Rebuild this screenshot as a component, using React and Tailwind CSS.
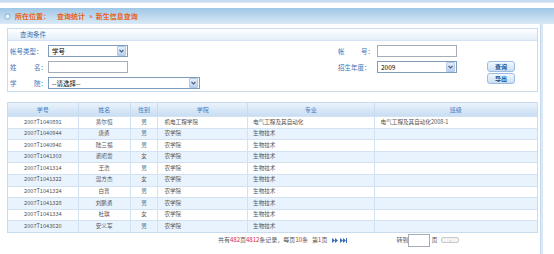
import React from 'react'

const rows = [
  ['2007T1040891', '黄尔恒', '男', '机电工程学院', '电气工程及其自动化', '电气工程及其自动化2008-1'],
  ['2007T1040944', '唐勇', '男', '农学院', '生物技术', ''],
  ['2007T1040946', '陆三福', '男', '农学院', '生物技术', ''],
  ['2007T1041303', '裘昭蕾', '女', '农学院', '生物技术', ''],
  ['2007T1041314', '王浩', '男', '农学院', '生物技术', ''],
  ['2007T1041322', '温方杰', '女', '农学院', '生物技术', ''],
  ['2007T1041324', '白普', '男', '农学院', '生物技术', ''],
  ['2007T1041328', '刘鹏勇', '男', '农学院', '生物技术', ''],
  ['2007T1041334', '杜琪', '女', '农学院', '生物技术', ''],
  ['2007T1043620', '安义军', '男', '农学院', '生物技术', ''],
]

const cols = [
  { label: '学号', w: 'w-[71px]', align: 'justify-center' },
  { label: '姓名', w: 'w-[52px]', align: 'justify-center' },
  { label: '性别', w: 'w-[28px]', align: 'justify-center' },
  { label: '学院', w: 'w-[90px]', align: 'justify-start pl-[6px]' },
  { label: '专业', w: 'w-[127px]', align: 'justify-start pl-[5px]' },
  { label: '班级', w: 'w-[163px]', align: 'justify-start pl-[6px]' },
]

const font = { fontFamily: '"Noto Sans CJK SC", "Liberation Sans", sans-serif' }

function Select({ value, w }) {
  return (
    <div className={`${w} h-[12px] border border-[#7f9db9] bg-white flex items-center`}>
      <span className="flex-1 pl-[3px] text-[6.5px] leading-none text-black">{value}</span>
      <span className="w-[9px] h-[10px] mr-[1px] rounded-[1px] bg-gradient-to-b from-[#e3eefb] to-[#b9d1f0] border border-[#b3c9e8] flex items-center justify-center">
        <svg width="5" height="4" viewBox="0 0 5 4"><path d="M0.5 1 L2.5 3 L4.5 1" stroke="#4d6185" strokeWidth="1.2" fill="none" /></svg>
      </span>
    </div>
  )
}

function Input({ w }) {
  return <div className={`${w} h-[12px] border border-[#a5acb5] bg-white`} />
}

function Btn({ children }) {
  return (
    <div className="w-[28px] h-[11px] rounded-[3px] border border-[#9dbde0] bg-gradient-to-b from-[#f4f9fe] to-[#c9def4] flex items-center justify-center text-[6px] leading-none text-[#1d4e8e] font-bold">
      {children}
    </div>
  )
}

export default function App() {
  return (
    <div className="w-[554px] h-[254px] bg-white overflow-hidden" style={font}>
      {/* top strip */}
      <div className="h-[3px] bg-[#c7dcf1] border-b border-[#dde9f6]" />
      <div className="h-[5px]" />
      {/* breadcrumb */}
      <div className="h-[16px] bg-gradient-to-b from-[#9fc7e7] to-[#d9e9f6] flex items-center pl-[4px] text-[7px] font-bold text-[#e6641b] leading-none">
        <svg width="7" height="7" viewBox="0 0 7 7" className="mr-[4px]">
          <circle cx="3.5" cy="3.5" r="2.6" fill="#eaf4fc" stroke="#6fa6d6" strokeWidth="0.8" />
        </svg>
        <span>所在位置：</span>
        <span className="ml-[7px]">查询统计</span>
        <span className="ml-[4px] mr-[3px]">»</span>
        <span>新生信息查询</span>
      </div>

      <div className="flex">
        <div className="w-[540px] pl-[7px] pt-[4px]">
          {/* query panel */}
          <div className="w-[531px] h-[64px] border border-[#c8dbef]">
            <div className="h-[12px] bg-gradient-to-b from-[#ffffff] to-[#e3eefa] border-b border-[#d3e3f4] flex items-center pl-[12px] text-[6.5px] leading-none text-[#3a6ea8]">
              查询条件
            </div>
            <div className="flex pl-[2px] pt-[4px] text-[6.5px] leading-none text-[#3f73b4]">
              <div className="w-[328px] flex flex-col">
                <div className="h-[16px] flex items-start">
                  <span className="w-[38px] pt-[3px]">帐号类型：</span>
                  <Select value="学号" w="w-[80px]" />
                </div>
                <div className="h-[16px] flex items-start">
                  <span className="w-[38px] pt-[3px] flex justify-between pr-[1px]"><span>姓</span><span>名：</span></span>
                  <Input w="w-[80px]" />
                </div>
                <div className="h-[16px] flex items-start">
                  <span className="w-[38px] pt-[3px] flex justify-between pr-[1px]"><span>学</span><span>院：</span></span>
                  <Select value="--请选择--" w="w-[152px]" />
                </div>
              </div>
              <div className="w-[149px] flex flex-col">
                <div className="h-[16px] flex items-start">
                  <span className="w-[39px] pt-[3px] flex justify-between pr-[3px]"><span>帐</span><span>号：</span></span>
                  <Input w="w-[80px]" />
                </div>
                <div className="h-[16px] flex items-start">
                  <span className="w-[39px] pt-[3px]">招生年度：</span>
                  <Select value="2009" w="w-[80px]" />
                </div>
              </div>
              <div className="flex flex-col gap-[1px] pt-[16px]">
                <Btn>查询</Btn>
                <Btn>导出</Btn>
              </div>
            </div>
          </div>

          {/* table */}
          <div className="mt-[10px] w-[531px] border border-[#c8dbef] text-[5.6px] leading-none">
            <div className="h-[13px] flex bg-gradient-to-b from-[#eaf3fc] to-[#c9def3] text-[#3e7ec2] text-[6px]">
              {cols.map((c, i) => (
                <div key={i} className={`${c.w} flex items-center justify-center border-r border-[#c8dbef] last:border-r-0`}>{c.label}</div>
              ))}
            </div>
            {rows.map((r, ri) => (
              <div key={ri} className={`h-[11.6px] flex border-t border-[#d2e2f2] ${ri % 2 ? 'bg-[#e9f3fd]' : 'bg-white'} text-[#555]`}>
                {r.map((v, ci) => (
                  <div key={ci} className={`${cols[ci].w} flex items-center ${cols[ci].align} border-r border-[#d2e2f2] last:border-r-0 whitespace-nowrap overflow-hidden`}>{v}</div>
                ))}
              </div>
            ))}
          </div>

          {/* pagination */}
          <div className="h-[15px] flex items-center text-[6px] leading-none text-[#555]">
            <span className="ml-[211px]">
              共有<span className="text-[#e02020]">482</span>页<span className="text-[#e02020]">4812</span>条记录，每页<span className="text-[#e02020]">10</span>条
              <span className="ml-[4px]">第<span className="text-[#e02020]">1</span>页</span>
            </span>
            <span className="ml-[5px] flex items-center gap-[2px]">
              <svg width="6" height="5" viewBox="0 0 6 5"><path d="M0 0 L3 2.5 L0 5Z M3 0 L6 2.5 L3 5Z" fill="#3a6fb8" /></svg>
              <svg width="7" height="5" viewBox="0 0 7 5"><path d="M0 0 L3 2.5 L0 5Z M3 0 L6 2.5 L3 5Z" fill="#3a6fb8" /><rect x="6" y="0" width="1" height="5" fill="#3a6fb8" /></svg>
            </span>
            <span className="ml-[49px]">转到</span>
            <div className="w-[22px] h-[13px] border border-[#a5acb5] bg-white" />
            <span className="ml-[1px]">页</span>
            <div className="ml-[4px] w-[18px] h-[6px] rounded-[2px] border border-[#c8c8c8] bg-[#f3f3f3] flex items-center justify-center text-[4px] text-[#666]">›</div>
          </div>
        </div>
        {/* right edge */}
        <div className="w-[3px] h-[240px] bg-[#dbe8f5] border-l border-[#c6daef]" />
      </div>
    </div>
  )
}
